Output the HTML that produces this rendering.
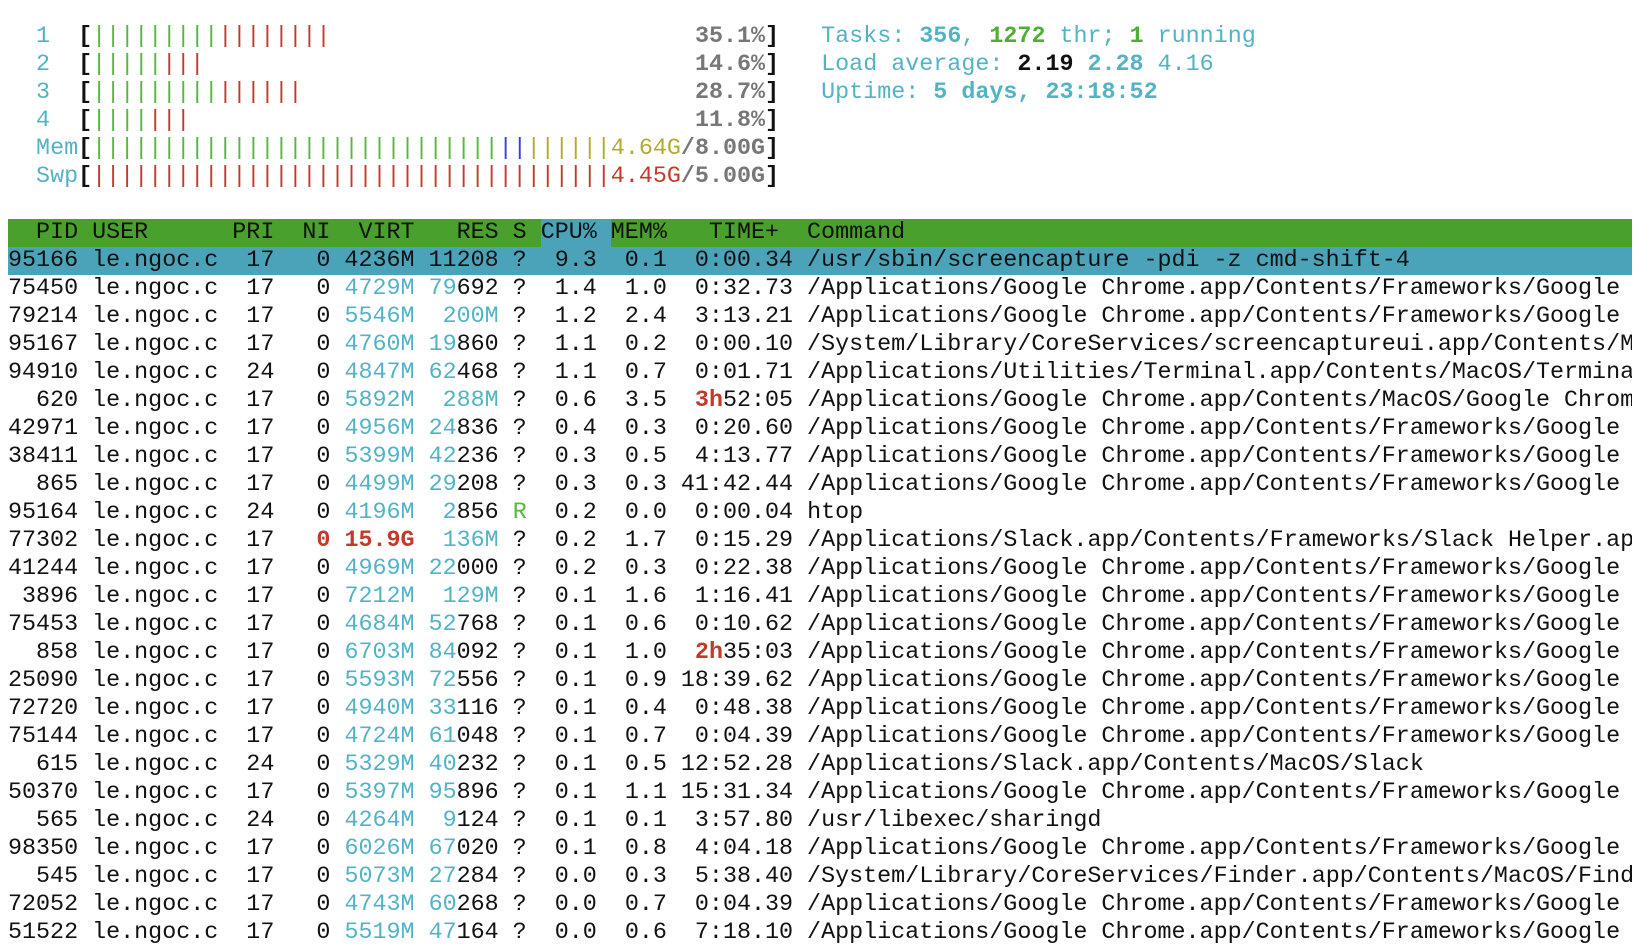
<!DOCTYPE html>
<html><head><meta charset="utf-8"><style>
html,body{margin:0;padding:0;background:#fff;width:1634px;height:948px;overflow:hidden}
#t{position:absolute;left:8px;top:22.5px;width:1624px;font-family:"Liberation Mono","DejaVu Sans Mono",monospace;font-size:23.37px;color:#111}
.l{height:28px;line-height:28px;white-space:pre;overflow:hidden}
.c{color:#52b3c4}.g{color:#55b83f}.r{color:#c23a2a}.y{color:#b3ab2e}.b{color:#3b3bdf}
.gr{color:#777;font-weight:bold}.k{font-weight:bold;color:#111}
.cb{color:#52b3c4;font-weight:bold}.gb{color:#4fae35;font-weight:bold}.rb{color:#c23a2a;font-weight:bold}
.hd{background:#4aa02c;color:#111}.hc{background:#4aa3b8;display:inline-block;height:28px;vertical-align:top}
.sel{background:#4aa3b8}
</style></head><body><div id="t">
<div class="l">  <span class="c">1</span>  <span class="k">[</span><span class="g">|||||||||</span><span class="r">||||||||</span>                          <span class="gr">35.1%</span><span class="k">]</span>   <span class="c">Tasks: </span><span class="cb">356</span><span class="c">, </span><span class="gb">1272</span><span class="c"> thr; </span><span class="gb">1</span><span class="c"> running</span></div>
<div class="l">  <span class="c">2</span>  <span class="k">[</span><span class="g">|||||</span><span class="r">|||</span>                                   <span class="gr">14.6%</span><span class="k">]</span>   <span class="c">Load average: </span><span class="k">2.19 </span><span class="cb">2.28 </span><span class="c">4.16</span></div>
<div class="l">  <span class="c">3</span>  <span class="k">[</span><span class="g">|||||||||</span><span class="r">||||||</span>                            <span class="gr">28.7%</span><span class="k">]</span>   <span class="c">Uptime: </span><span class="cb">5 days, 23:18:52</span></div>
<div class="l">  <span class="c">4</span>  <span class="k">[</span><span class="g">||||</span><span class="r">|||</span>                                    <span class="gr">11.8%</span><span class="k">]</span></div>
<div class="l">  <span class="c">Mem</span><span class="k">[</span><span class="g">|||||||||||||||||||||||||||||</span><span class="b">||</span><span class="y">||||||4.64G</span><span class="gr">/8.00G</span><span class="k">]</span></div>
<div class="l">  <span class="c">Swp</span><span class="k">[</span><span class="r">|||||||||||||||||||||||||||||||||||||4.45G</span><span class="gr">/5.00G</span><span class="k">]</span></div>
<div class="l"> </div>
<div class="l hd">  PID USER      PRI  NI  VIRT   RES S <span class="hc">CPU% </span>MEM%   TIME+  Command</div>
<div class="l sel">95166 le.ngoc.c  17   0 4236M 11208 ?  9.3  0.1  0:00.34 /usr/sbin/screencapture -pdi -z cmd-shift-4</div>
<div class="l">75450 le.ngoc.c  17   0 <span class="c">4729M</span> <span class="c">79</span>692 ?  1.4  1.0  0:32.73 /Applications/Google Chrome.app/Contents/Frameworks/Google Chrome Helper</div>
<div class="l">79214 le.ngoc.c  17   0 <span class="c">5546M</span> <span class="c"> 200M</span> ?  1.2  2.4  3:13.21 /Applications/Google Chrome.app/Contents/Frameworks/Google Chrome Helper</div>
<div class="l">95167 le.ngoc.c  17   0 <span class="c">4760M</span> <span class="c">19</span>860 ?  1.1  0.2  0:00.10 /System/Library/CoreServices/screencaptureui.app/Contents/MacOS/screencaptureui</div>
<div class="l">94910 le.ngoc.c  24   0 <span class="c">4847M</span> <span class="c">62</span>468 ?  1.1  0.7  0:01.71 /Applications/Utilities/Terminal.app/Contents/MacOS/Terminal</div>
<div class="l">  620 le.ngoc.c  17   0 <span class="c">5892M</span> <span class="c"> 288M</span> ?  0.6  3.5  <span class="rb">3h</span>52:05 /Applications/Google Chrome.app/Contents/MacOS/Google Chrome</div>
<div class="l">42971 le.ngoc.c  17   0 <span class="c">4956M</span> <span class="c">24</span>836 ?  0.4  0.3  0:20.60 /Applications/Google Chrome.app/Contents/Frameworks/Google Chrome Helper</div>
<div class="l">38411 le.ngoc.c  17   0 <span class="c">5399M</span> <span class="c">42</span>236 ?  0.3  0.5  4:13.77 /Applications/Google Chrome.app/Contents/Frameworks/Google Chrome Helper</div>
<div class="l">  865 le.ngoc.c  17   0 <span class="c">4499M</span> <span class="c">29</span>208 ?  0.3  0.3 41:42.44 /Applications/Google Chrome.app/Contents/Frameworks/Google Chrome Helper</div>
<div class="l">95164 le.ngoc.c  24   0 <span class="c">4196M</span>  <span class="c">2</span>856 <span class="g">R</span>  0.2  0.0  0:00.04 htop</div>
<div class="l">77302 le.ngoc.c  17   <span class="rb">0</span> <span class="rb">15.9G</span> <span class="c"> 136M</span> ?  0.2  1.7  0:15.29 /Applications/Slack.app/Contents/Frameworks/Slack Helper.app/Contents</div>
<div class="l">41244 le.ngoc.c  17   0 <span class="c">4969M</span> <span class="c">22</span>000 ?  0.2  0.3  0:22.38 /Applications/Google Chrome.app/Contents/Frameworks/Google Chrome Helper</div>
<div class="l"> 3896 le.ngoc.c  17   0 <span class="c">7212M</span> <span class="c"> 129M</span> ?  0.1  1.6  1:16.41 /Applications/Google Chrome.app/Contents/Frameworks/Google Chrome Helper</div>
<div class="l">75453 le.ngoc.c  17   0 <span class="c">4684M</span> <span class="c">52</span>768 ?  0.1  0.6  0:10.62 /Applications/Google Chrome.app/Contents/Frameworks/Google Chrome Helper</div>
<div class="l">  858 le.ngoc.c  17   0 <span class="c">6703M</span> <span class="c">84</span>092 ?  0.1  1.0  <span class="rb">2h</span>35:03 /Applications/Google Chrome.app/Contents/Frameworks/Google Chrome Helper</div>
<div class="l">25090 le.ngoc.c  17   0 <span class="c">5593M</span> <span class="c">72</span>556 ?  0.1  0.9 18:39.62 /Applications/Google Chrome.app/Contents/Frameworks/Google Chrome Helper</div>
<div class="l">72720 le.ngoc.c  17   0 <span class="c">4940M</span> <span class="c">33</span>116 ?  0.1  0.4  0:48.38 /Applications/Google Chrome.app/Contents/Frameworks/Google Chrome Helper</div>
<div class="l">75144 le.ngoc.c  17   0 <span class="c">4724M</span> <span class="c">61</span>048 ?  0.1  0.7  0:04.39 /Applications/Google Chrome.app/Contents/Frameworks/Google Chrome Helper</div>
<div class="l">  615 le.ngoc.c  24   0 <span class="c">5329M</span> <span class="c">40</span>232 ?  0.1  0.5 12:52.28 /Applications/Slack.app/Contents/MacOS/Slack</div>
<div class="l">50370 le.ngoc.c  17   0 <span class="c">5397M</span> <span class="c">95</span>896 ?  0.1  1.1 15:31.34 /Applications/Google Chrome.app/Contents/Frameworks/Google Chrome Helper</div>
<div class="l">  565 le.ngoc.c  24   0 <span class="c">4264M</span>  <span class="c">9</span>124 ?  0.1  0.1  3:57.80 /usr/libexec/sharingd</div>
<div class="l">98350 le.ngoc.c  17   0 <span class="c">6026M</span> <span class="c">67</span>020 ?  0.1  0.8  4:04.18 /Applications/Google Chrome.app/Contents/Frameworks/Google Chrome Helper</div>
<div class="l">  545 le.ngoc.c  17   0 <span class="c">5073M</span> <span class="c">27</span>284 ?  0.0  0.3  5:38.40 /System/Library/CoreServices/Finder.app/Contents/MacOS/Finder</div>
<div class="l">72052 le.ngoc.c  17   0 <span class="c">4743M</span> <span class="c">60</span>268 ?  0.0  0.7  0:04.39 /Applications/Google Chrome.app/Contents/Frameworks/Google Chrome Helper</div>
<div class="l">51522 le.ngoc.c  17   0 <span class="c">5519M</span> <span class="c">47</span>164 ?  0.0  0.6  7:18.10 /Applications/Google Chrome.app/Contents/Frameworks/Google Chrome Helper</div>
</div></body></html>
